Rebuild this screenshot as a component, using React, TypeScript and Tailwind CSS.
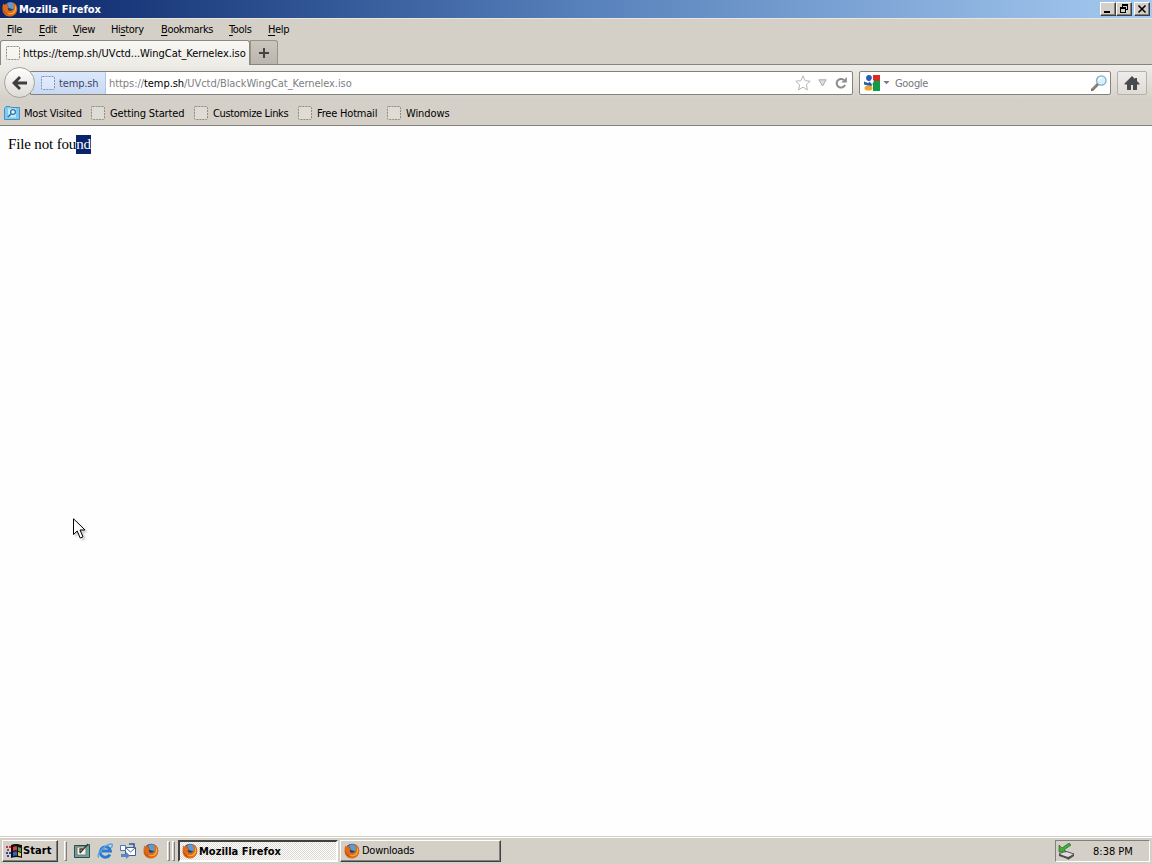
import type { ReactNode } from "react";

const menus = [
    { key: "F", before: "", after: "ile", width: "w-[32px]" },
    { key: "E", before: "", after: "dit", width: "w-[34px]" },
    { key: "V", before: "", after: "iew", width: "w-[38px]" },
    { key: "s", before: "Hi", after: "tory", width: "w-[50px]" },
    { key: "B", before: "", after: "ookmarks", width: "w-[68px]" },
    { key: "T", before: "", after: "ools", width: "w-[39px]" },
    { key: "H", before: "", after: "elp", width: "w-[40px]" },
];

const bookmarks = [
    { label: "Getting Started", width: "w-[103px]", tracking: "tracking-[-0.15px]" },
    { label: "Customize Links", width: "w-[104px]", tracking: "tracking-[-0.35px]" },
    { label: "Free Hotmail", width: "w-[89px]", tracking: "tracking-[-0.2px]" },
    { label: "Windows", width: "w-[80px]", tracking: "tracking-[-0.1px]" },
];

function BlankPageIcon({ className = "", stroke = "#8e8a82" }: { className?: string; stroke?: string }) {
    return (
        <svg viewBox="0 0 14 14" className={`h-[14px] w-[14px] shrink-0 ${className}`}>
            <rect x="0.5" y="0.5" width="13" height="13" rx="1" fill="#fff" fillOpacity="0.25" stroke={stroke} strokeDasharray="2 1" />
        </svg>
    );
}

function FirefoxIcon() {
    return (
        <svg viewBox="0 0 16 16" className="h-4 w-4 shrink-0">
            <circle cx="8.2" cy="7.8" r="7" fill="#24437f" />
            <path d="M5 2.5C7 .8 10.500 1 12 3c1 2 .5 4-.8 5.200L7 7z" fill="#5b9bd0" />
            <path d="M1.200 2.600 2.700 4C3.600 3 5 2.800 6 3.300L5.300 5 7.500 6 5.800 7.300C5.600 9.200 7 10.300 9 9.800c2.400-.5 3.300-2.700 2.600-5.200C11.200 3 10.500 2 9.600 1.200c4 .8 6.100 4.200 5.600 7.700-.5 3.800-3.600 6.500-7.500 6.500C3.500 15.400.4 12 .5 7.900.5 6 .9 4 1.200 2.600z" fill="#df6b17" />
            <path d="M12.700 3.600c1.500 2 1.900 4.700.6 7-1.700 2.900-5.400 3.500-8.300 1.500 4.100 1 7.600-1 8.100-4.200.2-1.500 0-3-.4-4.300z" fill="#f8bb35" />
            <path d="M1.300 7c.6 3.500 2.700 5.800 5.700 6.500-3.700.3-5.900-2.700-5.700-6.500z" fill="#ae3f18" />
        </svg>
    );
}

function CaptionButton({ children, className = "" }: { children: ReactNode; className?: string }) {
    return (
        <button className={`flex h-[14px] w-4 items-center justify-center border border-t-white border-r-[#404040] border-b-[#404040] border-l-white bg-[#d4d0c8] shadow-[inset_-1px_-1px_#808080] ${className}`}>
            {children}
        </button>
    );
}

function TitleBar() {
    return (
        <div className="flex h-[18px] items-center bg-linear-to-r from-[#0b2469] via-[#5680ba] via-50% to-[#a6caf0] pl-[2px]">
            <FirefoxIcon />
            <span className="ml-px pt-px text-[11px] font-bold tracking-normal text-white">Mozilla Firefox</span>
            <div className="ml-auto flex pr-[2px]">
                <CaptionButton>
                    <svg viewBox="0 0 12 10" className="h-[10px] w-3"><path d="M2 7h6v2H2z" /></svg>
                </CaptionButton>
                <CaptionButton>
                    <svg viewBox="0 0 12 10" className="h-[10px] w-3" shapeRendering="crispEdges">
                        <path d="M4 0h6v6H8V5h1V2H5v1H4zM2 3h6v6H2zm1 2v3h4V5z" fillRule="evenodd" />
                    </svg>
                </CaptionButton>
                <CaptionButton className="ml-[2px]">
                    <svg viewBox="0 0 12 10" className="h-[10px] w-3" stroke="#000" strokeWidth="1.600"><path d="m2.500 1.500 7 7M9.500 1.500l-7 7" /></svg>
                </CaptionButton>
            </div>
        </div>
    );
}

function MenuBar() {
    return (
        <div className="flex h-[22px] items-center border-t border-[#e9e5dd] pl-[7px]">
            {menus.map((menu) => (
                <span key={menu.key} className={`${menu.width} whitespace-nowrap tracking-[-0.35px]`}>
                    {menu.before}
                    <span className="underline underline-offset-2">{menu.key}</span>
                    {menu.after}
                </span>
            ))}
        </div>
    );
}

function TabStrip() {
    return (
        <div className="flex h-[25px] items-end border-b border-[#85857f]">
            <div className="-mb-px flex h-[25px] w-[250px] items-center rounded-t-[3px] border border-b-0 border-[#8b8982] bg-linear-to-b from-[#f8f7f4] to-[#edebe6] pl-[5px]">
                <BlankPageIcon />
                <span className="ml-[3px] whitespace-nowrap pt-[2px] tracking-[-0.05px]">https://temp.sh/UVctd...WingCat_Kernelex.iso</span>
            </div>
            <button className="flex h-6 w-7 items-center justify-center rounded-tr-[3px] border border-b-0 border-[#96938b] bg-linear-to-b from-[#cbc7bf] to-[#b9b5ad]">
                <svg viewBox="0 0 10 10" className="h-[10px] w-[10px]"><path d="M4 0h2v4h4v2H6v4H4V6H0V4h4z" fill="#45443f" /></svg>
            </button>
        </div>
    );
}

function NavigationBar() {
    return (
        <div className="flex h-[35px] items-center bg-linear-to-b from-[#eeece8] to-[#d4d0c8] pl-1">
            <button className="z-10 flex h-[31px] w-[31px] shrink-0 items-center justify-center rounded-full border border-[#a5a29b] bg-linear-to-b from-white to-[#dedbd5]">
                <svg viewBox="0 0 16 16" className="h-4 w-4"><path d="M0 8 7 1l2 2-3.500 3.500H15v3H5.500L9 13l-2 2z" fill="#3e3e3e" /></svg>
            </button>
            <div className="-ml-[5px] flex h-6 w-[823px] items-center rounded-r-[2px] border border-[#85827c] bg-white">
                <div className="flex h-full w-[75px] shrink-0 items-center border-r border-[#b2c3e4] bg-linear-to-b from-[#dce8fb] to-[#c9d9f3] pl-[10px] text-[#3c4863]">
                    <BlankPageIcon stroke="#7d92bf" />
                    <span className="ml-[4px] pt-[2px] tracking-[-0.15px]">temp.sh</span>
                </div>
                <span className="ml-[3px] whitespace-nowrap pt-[2px] tracking-[-0.06px] text-[#808080]">
                    https://<span className="text-black">temp.sh</span>/UVctd/BlackWingCat_Kernelex.iso
                </span>
                <div className="ml-auto flex items-center pr-[5px]">
                    <svg viewBox="0 0 16 16" className="h-4 w-4" fill="#fff" stroke="#b6b6b6" strokeLinejoin="round"><path d="m8 .8 2.100 4.900 5.100.5-3.800 3.500 1 5.200L8 12.200l-4.400 2.700 1-5.200L.8 6.200l5.100-.5z" /></svg>
                    <svg viewBox="0 0 9 8" className="ml-[7px] h-2 w-[9px]" fill="#dedede" stroke="#a8a8a8"><path d="M.8.800h7.400L4.500 7z" /></svg>
                    <svg viewBox="0 0 12 12" className="ml-2 h-3 w-3">
                        <path d="M8.800 3A4.300 4.300 0 1 0 10 7.800" fill="none" stroke="#8c8c8c" strokeWidth="2" />
                        <path d="M11.800 0v5.500H6.300z" fill="#8c8c8c" />
                    </svg>
                </div>
            </div>
            <div className="ml-[6px] flex h-6 w-[252px] items-center rounded-[2px] border border-[#85827c] bg-white pl-1">
                <svg viewBox="0 0 16 16" className="h-4 w-4">
                    <path d="M9 0h7v6H9z" fill="#de2923" />
                    <path d="M9 6h7v10H9z" fill="#129b47" />
                    <path d="M0 6h6l3 5v5H0z" fill="#fff" />
                    <circle cx="5" cy="3" r="2.900" fill="#1f5fba" />
                    <path d="M0 6.500 4 8l2-1.500 3 2-2 3-7-2z" fill="#285eae" />
                    <ellipse cx="4.500" cy="13" rx="4" ry="2.600" fill="#eba82e" />
                    <path d="M8 3.500 10 6 8 9.500 6 7z" fill="#fff" />
                    <path d="m10 8 3-3 2 2-2 3z" fill="#129b47" />
                </svg>
                <svg viewBox="0 0 7 4" className="ml-[3px] h-1 w-[7px]"><path d="M.5 0h6l-3 3.200z" fill="#777" /></svg>
                <span className="ml-[5px] pt-[2px] text-[#777]">Google</span>
                <svg viewBox="0 0 16 16" className="mr-[3px] ml-auto h-4 w-4">
                    <path d="m1 15 6-6" stroke="#77706b" strokeWidth="2.800" strokeLinecap="round" />
                    <path d="m1.500 14 4-4" stroke="#c59c75" strokeWidth="1" />
                    <circle cx="10.300" cy="5.500" r="4.700" fill="#d8f0fc" stroke="#80abc8" strokeWidth="1.300" />
                    <path d="M7.500 5.500c.3-2 2-3 3.700-2.500" stroke="#fff" strokeWidth="1.500" fill="none" />
                </svg>
            </div>
            <button className="ml-[6px] flex h-6 w-[30px] items-center justify-center rounded-[2px] border border-[#b4b1aa] bg-linear-to-b from-[#efedea] to-[#dedbd6]">
                <svg viewBox="0 0 16 14" className="h-[14px] w-4"><path d="M8 0 .5 7.500v1H3V14h4V9h2v5h4V8.500h2.500v-1L13 5V2h-2v1z" fill="#474b4d" /></svg>
            </button>
        </div>
    );
}

function BookmarksBar() {
    return (
        <div className="flex h-[26px] items-center border-b border-[#85827c] pl-1">
            <svg viewBox="0 0 16 14" className="h-[14px] w-4">
                <path d="M.5 2.500 2 .5h4l1 1h8.500v12H.5z" fill="#82c8ee" stroke="#4591bd" />
                <path d="M4 2.500h8v9H4z" fill="#c3e8fa" />
                <circle cx="9" cy="6" r="2.400" fill="#e5f7ff" stroke="#2977ad" strokeWidth="1.300" />
                <path d="m7 8-3 3" stroke="#2977ad" strokeWidth="1.700" />
            </svg>
            <span className="ml-1 w-[67px] whitespace-nowrap pt-[2px] tracking-[-0.2px]">Most Visited</span>
            {bookmarks.map((bookmark) => (
                <div key={bookmark.label} className={`flex items-center ${bookmark.width}`}>
                    <BlankPageIcon />
                    <span className={`ml-[5px] whitespace-nowrap pt-[2px] ${bookmark.tracking}`}>{bookmark.label}</span>
                </div>
            ))}
        </div>
    );
}

function QuickLaunch() {
    return (
        <div className="flex items-center gap-[7px]">
            {/* Show desktop */}
            <svg viewBox="0 0 16 16" className="h-4 w-4">
                <path d="M.5 2.500h12l3-1v13H.5z" fill="#6aa49c" stroke="#254f50" />
                <path d="M3 4h9v8H3z" fill="#f8f5df" stroke="#777" />
                <path d="M6 10V6h3M6 10l8-9" fill="none" stroke="#393939" strokeWidth="1.300" />
            </svg>
            {/* Internet Explorer */}
            <svg viewBox="0 0 16 16" className="h-4 w-4" fill="none">
                <path d="M13 11.500A5.200 5.200 0 1 1 13.500 8H5" stroke="#287bd0" strokeWidth="2.800" />
                <path d="M2 14.500C-2 12 8 2 13.500 1c3 0 2 2 .5 4" stroke="#5aa4e4" strokeWidth="1.400" />
            </svg>
            {/* Outlook Express */}
            <svg viewBox="0 0 16 16" className="h-4 w-4">
                <path d="M5.500 4.500h10v8h-10z" fill="#fff" stroke="#375f9c" />
                <path d="m6 5 4.500 4L15 5" fill="none" stroke="#375f9c" />
                <path d="M.5 2.500h5v5h-5z" fill="#f8fbff" stroke="#4c78b7" />
                <path d="M1 11h5V9l4 3.500L6 16v-2H1z" fill="#5985c5" />
                <path d="M9 1h5v3" fill="none" stroke="#28549b" strokeWidth="1.500" />
            </svg>
            <FirefoxIcon />
        </div>
    );
}

function Grip() {
    return <div className="h-5 w-[3px] border border-t-white border-r-[#808080] border-b-[#808080] border-l-white" />;
}

function Taskbar() {
    return (
        <div className="flex h-7 items-center border-t border-[#d4d0c8] bg-[#d4d0c8] pt-px pl-[2px] shadow-[inset_0_1px_white]">
            <button className="flex h-[22px] w-[56px] items-center border border-t-white border-r-[#404040] border-b-[#404040] border-l-white pl-[3px] text-[11px] font-bold shadow-[inset_-1px_-1px_#808080]">
                <svg viewBox="0 0 17 16" className="h-4 w-[17px]">
                    <path d="M5 2c3-1.500 6-1.500 11 0v13c-4-1.500-7-1.500-11 0z" fill="#111" />
                    <path d="M7 4c1.500-.8 2.500-.8 4-.4v4c-1.500-.5-2.500-.4-4 .2z" fill="#dc3f36" />
                    <path d="M12 4c1 .2 2 .5 3 1v4c-1-.5-2-.8-3-1z" fill="#54a55a" />
                    <path d="M7 9c1.500-.7 2.500-.7 4-.3v4c-1.500-.4-2.500-.4-4 .3z" fill="#355fc8" />
                    <path d="M12 9c1 .2 2 .5 3 1v3.500c-1-.4-2-.7-3-.8z" fill="#edcd49" />
                    <path d="M0 3h2v2H0zm3 0h2v2H3zM1 6h2v2H1z" fill="#ba3b46" />
                    <path d="M0 9h2v2H0zm3 0h2v2H3zm-2 3h2v2H1z" fill="#3644a0" />
                </svg>
                <span className="tracking-[0.1px]">Start</span>
            </button>
            <div className="ml-[6px]"><Grip /></div>
            <div className="ml-[7px]"><QuickLaunch /></div>
            <div className="ml-[8px] flex gap-[2px]"><Grip /><Grip /></div>
            <button className="ml-[3px] flex h-[22px] w-[160px] items-center border-2 border-t-[#404040] border-r-white border-b-white border-l-[#404040] bg-[#ebe9e4] bg-[repeating-conic-gradient(#fff_0_25%,#dcd9d2_0_50%)] bg-[length:2px_2px] pl-[2px] font-bold">
                <FirefoxIcon />
                <span className="ml-px pt-[2px] text-[11px] tracking-normal">Mozilla Firefox</span>
            </button>
            <button className="ml-[2px] flex h-[22px] w-[161px] items-center border border-t-white border-r-[#404040] border-b-[#404040] border-l-white pl-[3px] shadow-[inset_-1px_-1px_#808080]">
                <FirefoxIcon />
                <span className="ml-[2px] tracking-[-0.25px]">Downloads</span>
            </button>
            <div className="mr-[2px] ml-auto flex h-[22px] w-[95px] items-center border border-t-[#808080] border-r-white border-b-white border-l-[#808080] pl-[2px]">
                <svg viewBox="0 0 17 17" className="h-[17px] w-[17px]">
                    <path d="m1 11 6-3 9 3-6 5z" fill="#dedede" stroke="#555" />
                    <path d="m1 11 9 3v2l-9-3zM10 14l6-3v2l-6 4z" fill="#4d4d4d" />
                    <path d="M1 2v7h7L6 7l7-5-2-2-7 5z" fill="#42ac3c" stroke="#286b27" strokeWidth=".7" />
                </svg>
                <span className="ml-[18px] whitespace-nowrap pt-[2px] tracking-normal">8:38 PM</span>
            </div>
        </div>
    );
}

function MouseCursor() {
    return (
        <svg viewBox="0 0 13 21" className="absolute top-[518px] left-[73px] h-[21px] w-[13px] drop-shadow-[2px_2px_1px_#0003]">
            <path d="M.5.800v15.700L4.200 13l3 7 2.800-1.200L7 12h5z" fill="#fff" stroke="#000" />
        </svg>
    );
}

export default function App() {
    return (
        <div className="relative flex h-screen w-screen flex-col overflow-hidden bg-[#d4d0c8] font-['DejaVu_Sans_Condensed','DejaVu_Sans',sans-serif] text-[11px] leading-[14px] tracking-[-0.3px] text-black">
            <TitleBar />
            <MenuBar />
            <TabStrip />
            <NavigationBar />
            <BookmarksBar />
            <main className="flex-1 bg-[#fefefe] px-2 pt-[9px] font-['Liberation_Serif',serif] text-[15px] leading-[19px] tracking-[-0.15px]">
                File not fou<span className="inline-block h-[19px] bg-[#0a246a] text-white">nd</span>
            </main>
            <Taskbar />
            <MouseCursor />
        </div>
    );
}
